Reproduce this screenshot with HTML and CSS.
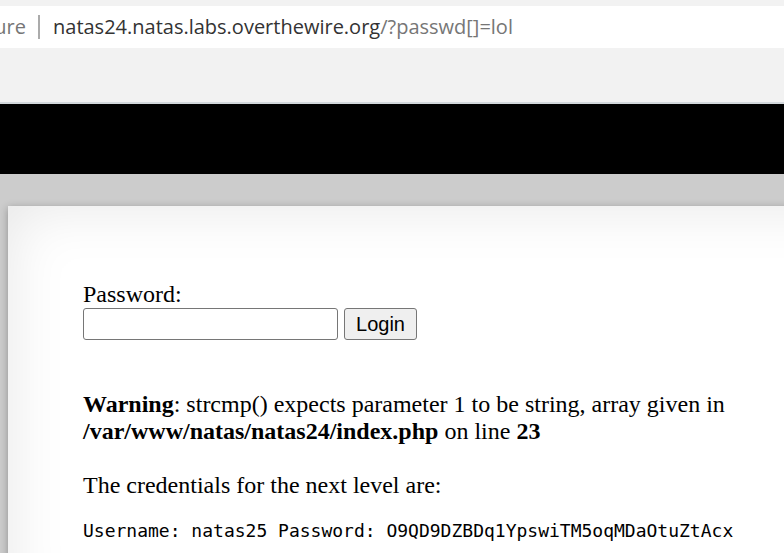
FILE: index.html
```html
<!DOCTYPE html>
<html lang="en">
<head>
<meta charset="utf-8">
<title>natas24</title>
<link rel="stylesheet" href="styles.css">
</head>
<body>
<div class="toolbar">
  <div class="address">
    <span class="security">ure</span>
    <span class="divider"></span>
    <span class="url">natas24.natas.labs.overthewire.org<span class="path">/?passwd[]=lol</span></span>
  </div>
</div>
<div class="banner"></div>
<main class="content">
  <form class="login">
    <label for="passwd">Password:</label>
    <div class="row">
      <input id="passwd" name="passwd" type="text">
      <button type="button">Login</button>
    </div>
  </form>
  <p class="warning"><b>Warning</b>: strcmp() expects parameter 1 to be string, array given in <b>/var/www/natas/natas24/index.php</b> on line <b>23</b></p>
  <p class="credentials">The credentials for the next level are:</p>
  <pre>Username: natas25 Password: O9QD9DZBDq1YpswiTM5oqMDaOtuZtAcx</pre>
</main>
</body>
</html>
```
FILE: styles.css
```css
* {
  box-sizing: border-box;
}

html {
  height: 100%;
}

body {
  display: flex;
  flex-direction: column;
  height: 100%;
  margin: 0;
  overflow: hidden;
  background: #ccc;
  color: #000;
  font: 24px/27px "Liberation Serif", serif;
}

.toolbar {
  flex: none;
  padding: 6px 0 54px;
  background: #f2f2f2;
  border-bottom: 2px solid #d3d8dc;
}

.address {
  display: flex;
  align-items: center;
  height: 42px;
  background: #fff;
  color: #333;
  font: 20px/28px "Open Sans", "Noto Sans", sans-serif;
  white-space: nowrap;
}

.security {
  display: flex;
  justify-content: flex-end;
  width: 26px;
  color: #767676;
}

.divider {
  width: 2px;
  height: 24px;
  margin: 0 13px 0 12px;
  background: #ababab;
}

.path {
  color: #767676;
}

.banner {
  flex: none;
  height: 70px;
  background: #000;
}

.content {
  flex: 1 0 auto;
  margin: 32px -80px 0 8px;
  padding: 75px 130px 75px 75px;
  background: #fff;
  box-shadow: 0 2px 8px rgba(0, 0, 0, 0.3), inset 0 0 60px rgba(0, 0, 0, 0.1);
}

label {
  display: block;
}

.row {
  display: flex;
  gap: 6px;
}

input,
button {
  height: 32px;
  margin: 0;
  border: 1px solid #767676;
  border-radius: 3px;
  color: #000;
  font: 20px/24px "Liberation Sans", sans-serif;
}

input {
  width: 255px;
  padding: 2px 4px;
  background: #fff;
}

button {
  width: 73px;
  padding: 0;
  background: #efefef;
}

.warning {
  margin: 51px 0 27px;
}

.credentials {
  margin: 0;
}

pre {
  margin: 20px 0 0;
  font: 18px/24px "DejaVu Sans Mono", monospace;
}
```
